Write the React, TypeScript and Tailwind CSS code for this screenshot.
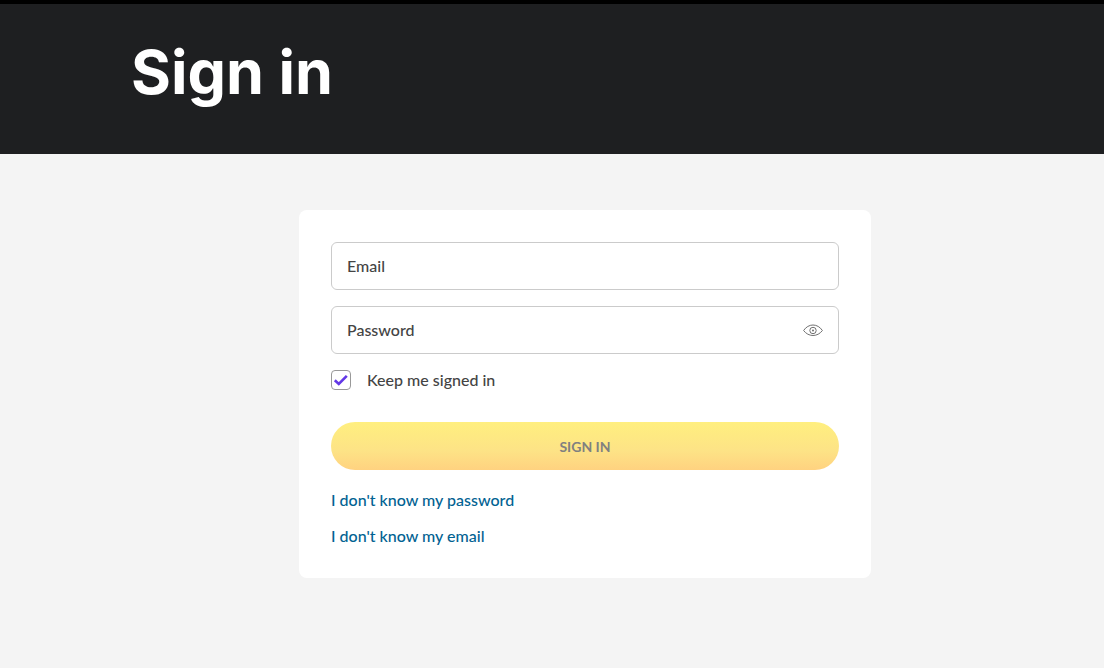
import { useState } from "react";

function EyeIcon() {
  return (
    <svg width="20" height="12" viewBox="0 0 20 12" fill="none" stroke="#707070" aria-hidden="true">
      <path d="M.6 6.500C3 3 6.300 1 10 1S17 3 19.400 6.500C17 9.700 13.700 11.500 10 11.500S3 9.700.6 6.500Z" />
      <circle cx="10" cy="6.500" r="3.200" />
      <circle cx="10" cy="6.500" r="1" fill="#707070" stroke="none" />
    </svg>
  );
}

const fieldClass =
  "h-12 w-full rounded-md border border-[#cbcbcb] bg-white px-[15px] pb-0.5 text-base text-[#444] outline-none placeholder:text-[#444] placeholder:opacity-100 focus:border-[#026292]";

export default function App() {
  const [visible, setVisible] = useState(false);

  return (
    <div className="min-h-screen bg-[#f4f4f4] font-['Lato','Liberation_Sans',sans-serif] font-medium text-[#444]">
      <header className="border-t-4 border-black bg-[#1e1f21] pt-7 pr-[65px] pb-[42px] pl-[131px]">
        <h1 className="font-['Inter','Lato',sans-serif] text-[61px] leading-[80px] font-bold text-white">
          Sign in
        </h1>
      </header>
      <main className="flex justify-center py-14 pr-[65px] pl-[131px]">
        <form
          className="w-full max-w-[572px] rounded-lg bg-white p-8"
          onSubmit={(event) => event.preventDefault()}
        >
          <div className="flex flex-col gap-4">
            <input className={fieldClass} type="email" aria-label="Email" placeholder="Email" />
            <div className="relative">
              <input
                className={fieldClass}
                type={visible ? "text" : "password"}
                aria-label="Password"
                placeholder="Password"
              />
              <button
                type="button"
                aria-label="Show password"
                className="absolute inset-y-0 right-4 flex items-center"
                onClick={() => setVisible(!visible)}
              >
                <EyeIcon />
              </button>
            </div>
            <label className="flex items-center gap-4 text-base leading-5">
              <span className="grid size-5">
                <input
                  type="checkbox"
                  defaultChecked
                  className="peer col-start-1 row-start-1 size-5 appearance-none rounded border border-[#999] bg-white"
                />
                <svg
                  className="pointer-events-none invisible col-start-1 row-start-1 size-5 peer-checked:visible"
                  viewBox="0 0 20 20"
                  fill="none"
                  stroke="#6338e6"
                  strokeWidth="2.6"
                  aria-hidden="true"
                >
                  <path d="M3.8 10.2 7.8 14 15.8 5.8" />
                </svg>
              </span>
              Keep me signed in
            </label>
          </div>
          <button
            type="submit"
            className="mt-8 h-12 w-full rounded-full bg-linear-to-b from-[#ffef7f] via-[#fde386] via-60% to-[#ffd280] pt-0.5 text-sm font-bold text-[#808080]"
          >
            SIGN IN
          </button>
          <div className="mt-5 flex flex-col items-start gap-4 text-base leading-5 text-[#026292]">
            <a href="#password">I don't know my password</a>
            <a href="#email">I don't know my email</a>
          </div>
        </form>
      </main>
    </div>
  );
}
